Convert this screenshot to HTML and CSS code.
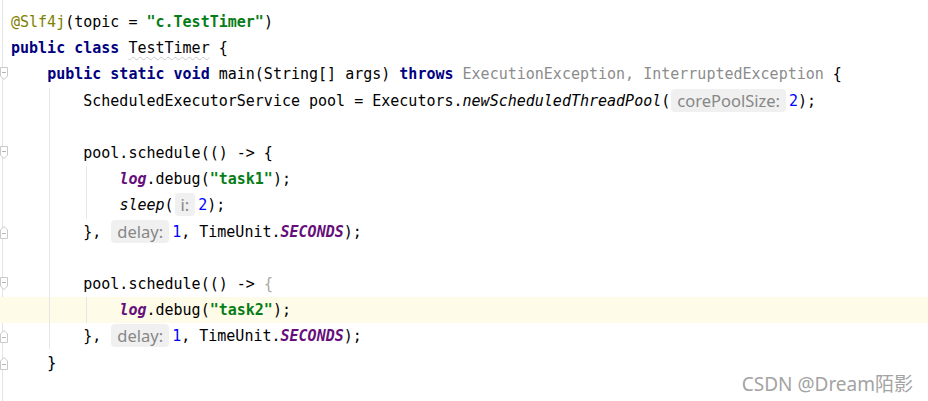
FILE: index.html
```html
<!DOCTYPE html>
<html>
<head>
<meta charset="utf-8">
<link rel="stylesheet" href="styles.css">
</head>
<body>
<div class="editor">
  <div class="line"><span class="gutter"></span><span class="code"><span class="ann">@Slf4j</span>(topic = <span class="str">"c.TestTimer"</span>)</span></div>
  <div class="line"><span class="gutter"></span><span class="code"><span class="kw">public class</span> <span class="typo">TestTimer</span> {</span></div>
  <div class="line"><span class="gutter"><svg class="fold" viewBox="0 0 9 14" width="9" height="14"><path d="M0.5 0.5H7.5V9L4 12.5L0.5 9Z"/><path class="minus" d="M2 5.5H6"/></svg></span><span class="code">    <span class="kw">public static void</span> main(String[] args) <span class="kw">throws</span> <span class="unused">ExecutionException, InterruptedException</span> {</span></div>
  <div class="line g1"><span class="gutter"></span><span class="code">        ScheduledExecutorService pool = Executors.<span class="it">newScheduledThreadPool</span>(<span class="hint">corePoolSize:</span><span class="num">2</span>);</span></div>
  <div class="line g1"><span class="gutter"></span><span class="code"> </span></div>
  <div class="line g1"><span class="gutter"><svg class="fold" viewBox="0 0 9 14" width="9" height="14"><path d="M0.5 0.5H7.5V9L4 12.5L0.5 9Z"/><path class="minus" d="M2 5.5H6"/></svg></span><span class="code">        pool.schedule(() -&gt; {</span></div>
  <div class="line g1 g2"><span class="gutter"></span><span class="code">            <span class="field">log</span>.debug(<span class="str">"task1"</span>);</span></div>
  <div class="line g1 g2"><span class="gutter"></span><span class="code">            <span class="it">sleep</span>(<span class="hint">i:</span><span class="num">2</span>);</span></div>
  <div class="line g1"><span class="gutter"><svg class="fold" viewBox="0 0 9 14" width="9" height="14"><path d="M0.5 13.5H7.5V5L4 1.5L0.5 5Z"/><path class="minus" d="M2 8.5H6"/></svg></span><span class="code">        }, <span class="hint">delay:</span><span class="num">1</span>, TimeUnit.<span class="field">SECONDS</span>);</span></div>
  <div class="line g1"><span class="gutter"></span><span class="code"> </span></div>
  <div class="line g1"><span class="gutter"><svg class="fold" viewBox="0 0 9 14" width="9" height="14"><path d="M0.5 0.5H7.5V9L4 12.5L0.5 9Z"/><path class="minus" d="M2 5.5H6"/></svg></span><span class="code">        pool.schedule(() -&gt; <span class="dim">{</span></span></div>
  <div class="line g1 g2 current"><span class="gutter"></span><span class="code">            <span class="field">log</span>.debug(<span class="str">"task2"</span>);</span></div>
  <div class="line g1"><span class="gutter"><svg class="fold" viewBox="0 0 9 14" width="9" height="14"><path d="M0.5 13.5H7.5V5L4 1.5L0.5 5Z"/><path class="minus" d="M2 8.5H6"/></svg></span><span class="code">        }, <span class="hint">delay:</span><span class="num">1</span>, TimeUnit.<span class="field">SECONDS</span>);</span></div>
  <div class="line"><span class="gutter"><svg class="fold" viewBox="0 0 9 14" width="9" height="14"><path d="M0.5 13.5H7.5V5L4 1.5L0.5 5Z"/><path class="minus" d="M2 8.5H6"/></svg></span><span class="code">    <span class="brace">}</span></span></div>
  <div class="line"><span class="gutter"></span><span class="code"> </span></div>
</div>
<div class="watermark">CSDN @Dream陌影</div>
</body>
</html>
```

FILE: styles.css
```css
html, body {
  margin: 0;
  padding: 0;
  background: #ffffff;
  width: 928px;
  height: 401px;
  overflow: hidden;
}

.editor {
  position: relative;
  padding-top: 9px;
  height: 392px;
  background-image: linear-gradient(#e3e3e3, #e3e3e3);
  background-size: 1px 100%;
  background-position: 2px 0;
  background-repeat: no-repeat;
}

.line {
  display: flex;
  align-items: center;
  height: 26.2px;
  font-family: "DejaVu Sans Mono", "Liberation Mono", monospace;
  font-size: 15px;
  color: #000000;
  background-repeat: no-repeat;
}

.line.g1 {
  background-image: linear-gradient(#e6e6e6, #e6e6e6);
  background-size: 1px 100%;
  background-position: 49px 0;
}

.line.g1.g2 {
  background-image: linear-gradient(#e6e6e6, #e6e6e6), linear-gradient(#e6e6e6, #e6e6e6);
  background-size: 1px 100%, 1px 100%;
  background-position: 49px 0, 86px 0;
}

.line.current {
  background-color: #fefbe9;
}

.gutter {
  flex: none;
  width: 11px;
  height: 100%;
  display: flex;
  align-items: center;
}

.fold {
  display: block;
}

.fold path {
  fill: #ffffff;
  stroke: #c9c9c9;
  stroke-width: 1;
}

.fold path.minus {
  fill: none;
  stroke: #b5b5b5;
}

.code {
  white-space: pre;
  line-height: 26px;
}

.kw {
  color: #000080;
  font-weight: bold;
}

.str {
  color: #067d17;
  font-weight: bold;
}

.ann {
  color: #808000;
}

.unused {
  color: #8c8c8c;
}

.num {
  color: #0000ff;
}

.it {
  font-style: italic;
}

.field {
  color: #660e7a;
  font-weight: bold;
  font-style: italic;
}

.dim {
  color: #a8a8a8;
}

.brace {
  color: #000000;
  text-shadow: 0 0 1px #9ec3ec;
}

.typo {
  text-decoration: underline wavy #c9c9c9;
  text-decoration-thickness: 1px;
  text-underline-offset: 3px;
}

.hint {
  display: inline-block;
  font-family: "Noto Sans", "Open Sans", sans-serif;
  font-size: 16.5px;
  line-height: 23px;
  height: 23px;
  color: #878787;
  background: #f0f0f0;
  border-radius: 4px;
  padding: 0 6px;
  margin: 0 3px 0 1px;
  vertical-align: middle;
  position: relative;
  top: -1px;
}

.watermark {
  position: absolute;
  right: 15px;
  bottom: 4px;
  font-family: "Noto Sans", "Noto Sans CJK SC", sans-serif;
  font-size: 19px;
  color: #a3a3a3;
  text-shadow: 0 0 1px #ffffff;
}
```
